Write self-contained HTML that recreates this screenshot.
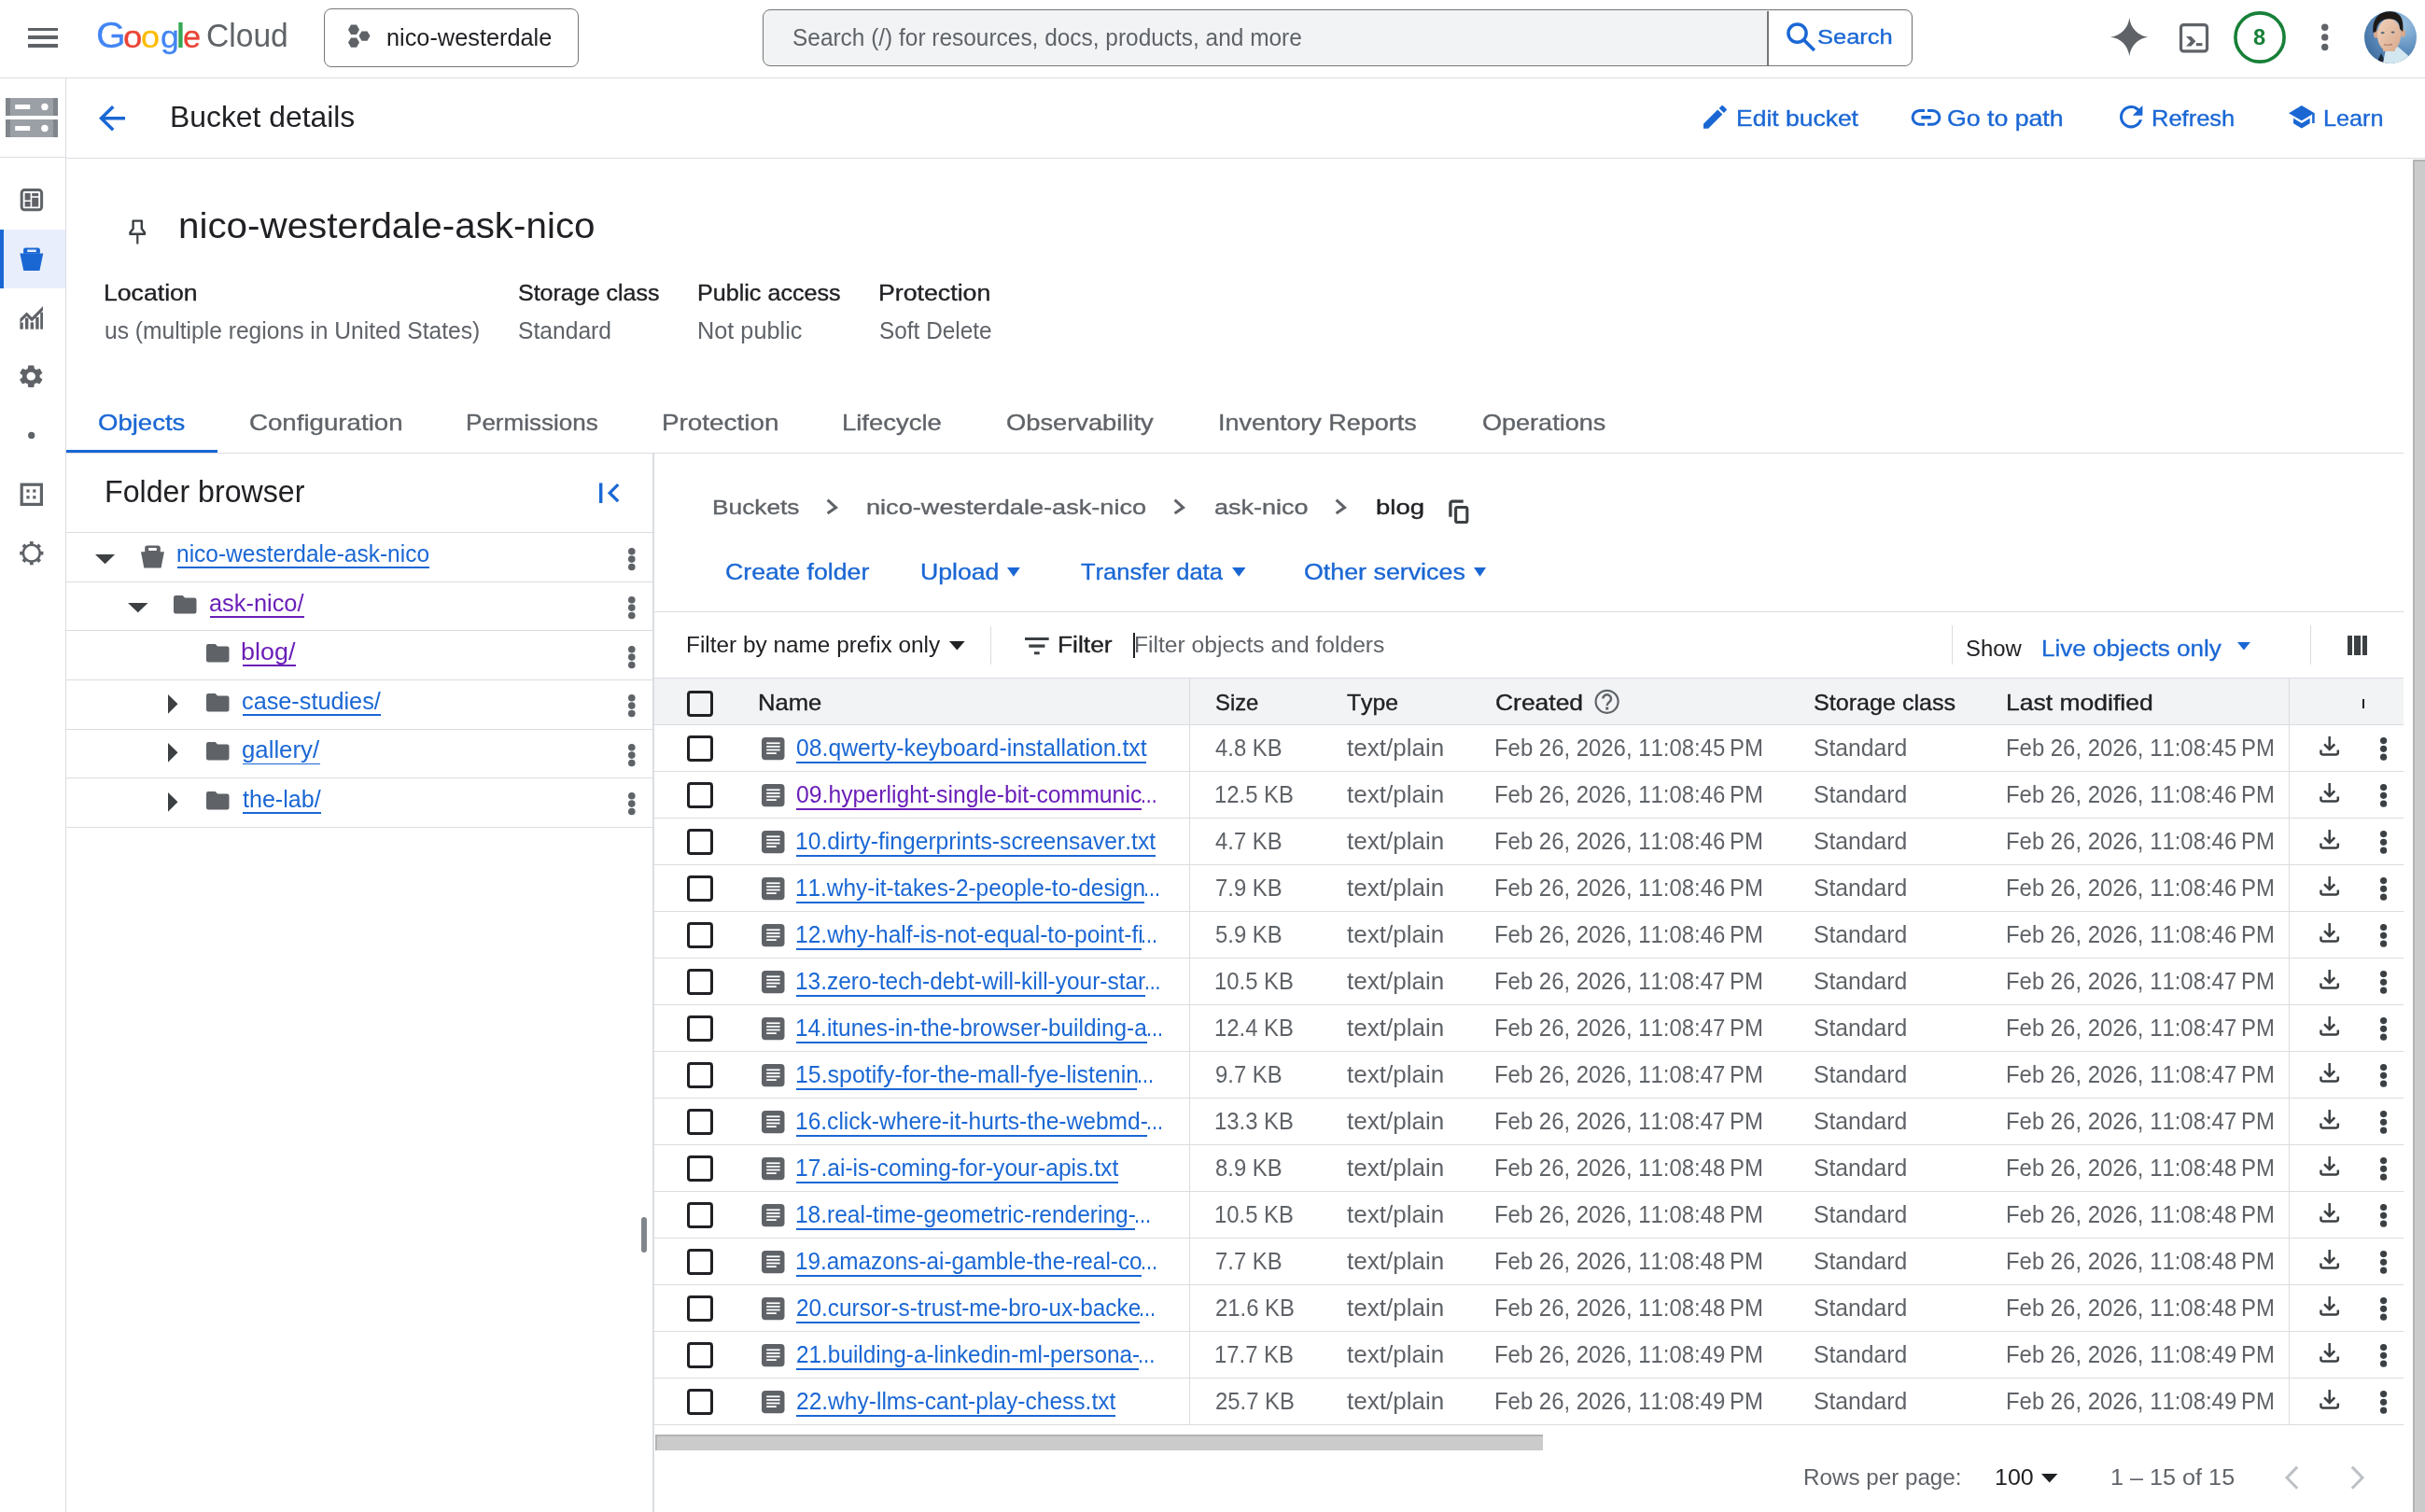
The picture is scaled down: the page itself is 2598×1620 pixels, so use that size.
<!DOCTYPE html>
<html><head><meta charset="utf-8"><title>Bucket details</title><style>*{margin:0;padding:0}
html,body{width:2598px;height:1620px;overflow:hidden;background:#fff}
body{position:relative;font-family:"Liberation Sans",sans-serif;will-change:transform}
.t{position:absolute;white-space:nowrap;line-height:1;font-kerning:none;transform-origin:0 0;font-family:"Liberation Sans",sans-serif}
.r{position:absolute}
.s{position:absolute;overflow:visible}
</style></head><body>
<div class="r" style="left:30.00px;top:29.50px;width:32.00px;height:3.60px;background:#5f6368;"></div>
<div class="r" style="left:30.00px;top:38.20px;width:32.00px;height:3.60px;background:#5f6368;"></div>
<div class="r" style="left:30.00px;top:47.00px;width:32.00px;height:3.60px;background:#5f6368;"></div>
<span class="t" style="left:102.65px;top:18.68px;font-size:38.30px;color:#4285f4;transform:scaleX(1.0639);-webkit-text-stroke:0.3px #4285f4;">G</span>
<span class="t" style="left:131.66px;top:22.74px;font-size:33.50px;color:#ea4335;transform:scaleX(1.0937);-webkit-text-stroke:0.3px #ea4335;">o</span>
<span class="t" style="left:151.49px;top:22.74px;font-size:33.50px;color:#fbbc04;transform:scaleX(1.0748);-webkit-text-stroke:0.3px #fbbc04;">o</span>
<span class="t" style="left:171.51px;top:22.74px;font-size:33.50px;color:#4285f4;transform:scaleX(1.0621);-webkit-text-stroke:0.3px #4285f4;">g</span>
<span class="t" style="left:188.40px;top:20.63px;font-size:36.00px;color:#34a853;transform:scaleX(1.3590);">l</span>
<span class="t" style="left:196.44px;top:22.74px;font-size:33.50px;color:#ea4335;transform:scaleX(1.0242);-webkit-text-stroke:0.3px #ea4335;">e</span>
<span class="t" style="left:220.79px;top:20.70px;font-size:35.80px;color:#5f6368;transform:scaleX(0.9383);">Cloud</span>
<div class="r" style="left:347.00px;top:9.00px;width:273.00px;height:63.00px;background:#fff;border:1.6px solid #747775;border-radius:8px;box-sizing:border-box;"></div>
<svg class="s" style="left:368.00px;top:22.00px" width="34.00" height="34.00" viewBox="0 0 34 34"><polygon points="17.00,9.80 14.00,15.00 8.00,15.00 5.00,9.80 8.00,4.60 14.00,4.60" fill="#5f6368"/><polygon points="28.50,16.60 25.50,21.80 19.50,21.80 16.50,16.60 19.50,11.40 25.50,11.40" fill="#5f6368"/><polygon points="17.00,23.60 14.00,28.80 8.00,28.80 5.00,23.60 8.00,18.40 14.00,18.40" fill="#5f6368"/></svg>
<span class="t" style="left:414.02px;top:26.99px;font-size:26.00px;color:#202124;transform:scaleX(0.9737);">nico-westerdale</span>
<div class="r" style="left:817.00px;top:10.00px;width:1231.50px;height:61.00px;background:#f1f3f4;border:1.6px solid #747775;border-radius:8px;box-sizing:border-box;"></div>
<div class="r" style="left:1894.00px;top:11.50px;width:153.00px;height:58.00px;background:#fff;border-radius:0 7px 7px 0;"></div>
<div class="r" style="left:1893.20px;top:11.50px;width:1.60px;height:58.00px;background:#747775;"></div>
<span class="t" style="left:848.89px;top:27.67px;font-size:25.20px;color:#5f6368;transform:scaleX(0.9699);">Search (/) for resources, docs, products, and more</span>
<svg class="s" style="left:1908.00px;top:20.00px" width="42.00" height="40.00" viewBox="0 0 42 40"><circle cx="17.50" cy="15.60" r="9.6" fill="none" stroke="#1a67d4" stroke-width="3.5"/><line x1="24.50" y1="22.80" x2="35.80" y2="34.00" stroke="#1a67d4" stroke-width="3.7"/></svg>
<span class="t" style="left:1946.84px;top:29.47px;font-size:22.60px;color:#1a67d4;transform:scaleX(1.1286);-webkit-text-stroke:0.35px #1a67d4;">Search</span>
<svg class="s" style="left:2258.70px;top:17.20px" width="44.60" height="45.30" viewBox="0 0 44.6 45.3"><path transform="translate(2 2) scale(1.6917 1.7208) translate(0.000 0.000)" d="M12 0 C12.6 6.4 17.6 11.4 24 12 C17.6 12.6 12.6 17.6 12 24 C11.4 17.6 6.4 12.6 0 12 C6.4 11.4 11.4 6.4 12 0 Z" fill="#5f6368" /></svg>
<svg class="s" style="left:2332.00px;top:22.00px" width="38.00" height="38.00" viewBox="0 0 38 38"><rect x="4.5" y="4.6" width="28" height="28.3" rx="3" fill="none" stroke="#5f6368" stroke-width="3.2"/><path d="M10 17 H15.4 L20.4 22.3 L15.4 27.6 H10 L15 22.3Z" fill="#5f6368"/><rect x="20.8" y="24.1" width="6.6" height="3.1" fill="#5f6368"/></svg>
<svg class="s" style="left:2390.00px;top:9.00px" width="62.00" height="62.00" viewBox="0 0 62 62"><circle cx="31" cy="31" r="26.1" fill="none" stroke="#188038" stroke-width="3.6"/></svg>
<span class="t" style="left:2414.25px;top:28.53px;font-size:23.00px;color:#188038;transform:scaleX(1.0305);font-weight:bold;">8</span>
<svg class="s" style="left:2484.00px;top:22.00px" width="14.00" height="36.00" viewBox="0 0 14 36"><circle cx="6.7" cy="7.20" r="3.7" fill="#5f6368"/><circle cx="6.7" cy="17.90" r="3.7" fill="#5f6368"/><circle cx="6.7" cy="28.50" r="3.7" fill="#5f6368"/></svg>
<svg class="s" style="left:2530px;top:9px" width="62" height="62" viewBox="2530 9 62 62">
<defs><clipPath id="avc"><circle cx="2561" cy="40" r="28"/></clipPath>
<radialGradient id="avg" cx="0.72" cy="0.28" r="0.8"><stop offset="0" stop-color="#9cc2e2"/><stop offset="0.55" stop-color="#5f8fbf"/><stop offset="1" stop-color="#3f6d9f"/></radialGradient>
<linearGradient id="avf" x1="0" y1="0" x2="1" y2="1"><stop offset="0" stop-color="#f0d2bb"/><stop offset="1" stop-color="#d9a98d"/></linearGradient></defs>
<g clip-path="url(#avc)">
<rect x="2530" y="9" width="62" height="62" fill="url(#avg)"/>
<path d="M2544 72 L2551 57 L2558 72Z" fill="#1c2636"/>
<path d="M2552 72 L2556 53 L2569 50 L2585 64 L2585 72Z" fill="#d3e7f1"/>
<rect x="2553" y="46" width="13" height="9" fill="#d9ad92"/>
<ellipse cx="2545.6" cy="36.5" rx="2.6" ry="4.2" fill="#d7a98d"/><ellipse cx="2574.4" cy="35.5" rx="2.6" ry="4.2" fill="#d7a98d"/>
<ellipse cx="2559.5" cy="37.5" rx="12.6" ry="17.6" fill="url(#avf)"/>
<path d="M2542.5 35 C2541 20 2549 12.3 2560 12.3 C2570.5 12.3 2576 19 2574.2 34 L2571 31 C2571 24 2567 19.6 2559 20.2 C2551 20.6 2546.5 25 2545.6 34 Z" fill="#1e1a18"/>
<ellipse cx="2552.6" cy="35.2" rx="2" ry="1.1" fill="#5a6a78"/><ellipse cx="2563.6" cy="34.6" rx="2" ry="1.1" fill="#5a6a78"/>
<path d="M2554 47.6 Q2558.5 49 2563 47.4" stroke="#b07c6a" stroke-width="1.2" fill="none"/>
</g></svg>
<div class="r" style="left:0.00px;top:83.00px;width:2598.00px;height:1.00px;background:#dadce0;"></div>
<div class="r" style="left:70.00px;top:84.00px;width:1.00px;height:1536.00px;background:#dadce0;"></div>
<svg class="s" style="left:0px;top:90px" width="70" height="70" viewBox="0 0 70 70">
<rect x="6" y="15" width="56" height="19" fill="#9aa0a6"/><rect x="6" y="15" width="5" height="19" fill="#80868b"/><rect x="57" y="15" width="5" height="19" fill="#80868b"/>
<rect x="16.2" y="22" width="16" height="5" fill="#fff"/><circle cx="47.9" cy="24.5" r="3.7" fill="#fff"/>
<rect x="6" y="38" width="56" height="19" fill="#9aa0a6"/><rect x="6" y="38" width="5" height="19" fill="#80868b"/><rect x="57" y="38" width="5" height="19" fill="#80868b"/>
<rect x="16.2" y="45" width="16" height="5" fill="#fff"/><circle cx="47.9" cy="47.5" r="3.7" fill="#fff"/>
</svg>
<div class="r" style="left:0.00px;top:168.00px;width:70.00px;height:1.00px;background:#dadce0;"></div>
<div class="r" style="left:71.00px;top:169.00px;width:2527.00px;height:1.00px;background:#dadce0;"></div>
<svg class="s" style="left:20.00px;top:200.00px" width="28.00" height="29.00" viewBox="0 0 28 29"><rect x="3.2" y="3.6" width="21.4" height="21.2" rx="3" fill="none" stroke="#5f6368" stroke-width="3"/><rect x="6.6" y="7" width="6" height="7.5" fill="#5f6368"/><rect x="6.6" y="16" width="6" height="5.5" fill="#5f6368"/><rect x="14.2" y="7" width="7" height="3.2" fill="#5f6368"/><rect x="14.2" y="11.8" width="7" height="9.7" fill="#5f6368"/></svg>
<div class="r" style="left:0.00px;top:246.00px;width:70.00px;height:63.00px;background:#e8eefb;"></div>
<div class="r" style="left:0.00px;top:246.00px;width:4.00px;height:63.00px;background:#1a67d4;"></div>
<svg class="s" style="left:20.00px;top:263.00px" width="28.00" height="29.00" viewBox="0 0 28 29"><path d="M7.3 2.4 h13.4 a2.2 2.2 0 0 1 2.2 2.2 v4.2 h-17.8 v-4.2 a2.2 2.2 0 0 1 2.2 -2.2z M9.2 4.6 v2.5 h9.6 v-2.5z" fill="#1a67d4" fill-rule="evenodd"/><path d="M1.4 8.6 H26.3 L22.4 27 H5.3 Z" fill="#1a67d4"/></svg>
<svg class="s" style="left:20.00px;top:326.00px" width="28.00" height="29.00" viewBox="0 0 28 29"><path d="M1.4 15.6 L8.6 8.4 L14.2 14 L26 2 V6.4 L14.2 18.4 L8.6 12.8 L1.4 20z" fill="#5f6368"/><rect x="1.4" y="19.5" width="3.4" height="7.2" fill="#5f6368"/><rect x="7" y="14.6" width="3.4" height="12.1" fill="#5f6368"/><rect x="12.6" y="19.4" width="3.4" height="7.3" fill="#5f6368"/><rect x="18.2" y="13.8" width="3.4" height="12.9" fill="#5f6368"/><rect x="23.2" y="8.6" width="2.8" height="18.1" fill="#5f6368"/></svg>
<svg class="s" style="left:19.40px;top:389.30px" width="28.60" height="28.40" viewBox="0 0 28.6 28.4"><path transform="translate(2 2) scale(1.2947 1.2200) translate(-2.500 -2.000)" d="M19.14 12.94c.04-.3.06-.61.06-.94 0-.32-.02-.64-.07-.94l2.03-1.58c.18-.14.23-.41.12-.61l-1.92-3.32c-.12-.22-.37-.29-.59-.22l-2.39.96c-.5-.38-1.03-.7-1.62-.94l-.36-2.54c-.04-.24-.24-.41-.48-.41h-3.84c-.24 0-.43.17-.47.41l-.36 2.54c-.59.24-1.13.57-1.62.94l-2.39-.96c-.22-.08-.47 0-.59.22L2.74 8.87c-.12.21-.08.47.12.61l2.03 1.58c-.05.3-.09.63-.09.94s.02.64.07.94l-2.03 1.58c-.18.14-.23.41-.12.61l1.92 3.32c.12.22.37.29.59.22l2.39-.96c.5.38 1.03.7 1.62.94l.36 2.54c.05.24.24.41.48.41h3.84c.24 0 .44-.17.47-.41l.36-2.54c.59-.24 1.13-.56 1.62-.94l2.39.96c.22.08.47 0 .59-.22l1.92-3.32c.12-.22.07-.47-.12-.61l-2.01-1.58zM12 15.6c-1.98 0-3.6-1.62-3.6-3.6s1.62-3.6 3.6-3.6 3.6 1.62 3.6 3.6-1.62 3.6-3.6 3.6z" fill="#5f6368" /></svg>
<svg class="s" style="left:28.00px;top:461.00px" width="12.00" height="12.00" viewBox="0 0 12 12"><circle cx="5.7" cy="5.4" r="3.6" fill="#5f6368"/></svg>
<svg class="s" style="left:20.00px;top:516.00px" width="28.00" height="28.00" viewBox="0 0 28 28"><rect x="3.2" y="3.2" width="21.2" height="21.2" fill="none" stroke="#5f6368" stroke-width="3.2"/><rect x="8.4" y="8.4" width="3.2" height="3.2" fill="#5f6368"/><rect x="15.2" y="8.4" width="3.2" height="3.2" fill="#5f6368"/><rect x="8.4" y="15.2" width="3.2" height="3.2" fill="#5f6368"/><rect x="15.2" y="15.2" width="3.2" height="3.2" fill="#5f6368"/></svg>
<svg class="s" style="left:20.00px;top:579.00px" width="28.00" height="28.00" viewBox="0 0 28 28"><g transform="translate(13.8 13.7)"><circle r="8.9" fill="none" stroke="#5f6368" stroke-width="2.6"/><rect x="-1.9" y="-12.6" width="3.8" height="3.6" transform="rotate(0)" fill="#5f6368"/><rect x="-1.9" y="-12.6" width="3.8" height="3.6" transform="rotate(45)" fill="#5f6368"/><rect x="-1.9" y="-12.6" width="3.8" height="3.6" transform="rotate(90)" fill="#5f6368"/><rect x="-1.9" y="-12.6" width="3.8" height="3.6" transform="rotate(135)" fill="#5f6368"/><rect x="-1.9" y="-12.6" width="3.8" height="3.6" transform="rotate(180)" fill="#5f6368"/><rect x="-1.9" y="-12.6" width="3.8" height="3.6" transform="rotate(225)" fill="#5f6368"/><rect x="-1.9" y="-12.6" width="3.8" height="3.6" transform="rotate(270)" fill="#5f6368"/><rect x="-1.9" y="-12.6" width="3.8" height="3.6" transform="rotate(315)" fill="#5f6368"/></g></svg>
<svg class="s" style="left:104.00px;top:110.50px" width="32.00" height="31.50" viewBox="0 0 32 31.5"><path transform="translate(2 2) scale(1.7500 1.7188) translate(-4.000 -4.000)" d="M20 11H7.83l5.59-5.59L12 4l-8 8 8 8 1.41-1.41L7.83 13H20v-2z" fill="#1a67d4" /></svg>
<span class="t" style="left:181.89px;top:109.11px;font-size:32.00px;color:#202124;transform:scaleX(0.9952);">Bucket details</span>
<svg class="s" style="left:1823.20px;top:111.20px" width="28.80" height="28.80" viewBox="0 0 28.8 28.8"><path transform="translate(2 2) scale(1.3778 1.3778) translate(-3.000 -3.000)" d="M3 17.25V21h3.75L17.81 9.94l-3.75-3.75L3 17.25zM20.71 7.04c.39-.39.39-1.02 0-1.41l-2.34-2.34c-.39-.39-1.02-.39-1.41 0l-1.83 1.83 3.75 3.75 1.83-1.83z" fill="#1a67d4" /></svg>
<span class="t" style="left:1860.33px;top:115.05px;font-size:23.80px;color:#1a67d4;transform:scaleX(1.1123);-webkit-text-stroke:0.35px #1a67d4;">Edit bucket</span>
<svg class="s" style="left:2046.00px;top:113.00px" width="36.00" height="26.00" viewBox="0 0 36 26"><path d="M16 5.4 H10.5 a7.4 7.4 0 0 0 0 14.8 H16" fill="none" stroke="#1a67d4" stroke-width="3"/><path d="M19 5.4 H24.5 a7.4 7.4 0 0 1 0 14.8 H19" fill="none" stroke="#1a67d4" stroke-width="3"/><rect x="12.3" y="11" width="10.5" height="3.6" fill="#1a67d4"/></svg>
<span class="t" style="left:2086.16px;top:115.05px;font-size:23.80px;color:#1a67d4;transform:scaleX(1.1208);-webkit-text-stroke:0.35px #1a67d4;">Go to path</span>
<svg class="s" style="left:2268.60px;top:111.20px" width="28.40" height="28.40" viewBox="0 0 28.4 28.4"><path transform="translate(2 2) scale(1.5250 1.5250) translate(-4.000 -4.000)" d="M17.65 6.35C16.2 4.9 14.21 4 12 4c-4.42 0-7.99 3.58-7.99 8s3.57 8 7.99 8c3.73 0 6.84-2.55 7.73-6h-2.08c-.82 2.33-3.04 4-5.65 4-3.31 0-6-2.69-6-6s2.69-6 6-6c1.66 0 3.14.69 4.22 1.78L13 11h7V4l-2.35 2.35z" fill="#1a67d4" /></svg>
<span class="t" style="left:2305.41px;top:115.05px;font-size:23.80px;color:#1a67d4;transform:scaleX(1.0709);-webkit-text-stroke:0.35px #1a67d4;">Refresh</span>
<svg class="s" style="left:2450.00px;top:111.20px" width="31.70" height="28.40" viewBox="0 0 31.7 28.4"><path transform="translate(2 2) scale(1.2591 1.3556) translate(-1.000 -3.000)" d="M5 13.18v4L12 21l7-3.82v-4L12 17l-7-3.82zM12 3L1 9l11 6 9-4.91V17h2V9L12 3z" fill="#1a67d4" /></svg>
<span class="t" style="left:2489.43px;top:115.05px;font-size:23.80px;color:#1a67d4;transform:scaleX(1.0597);-webkit-text-stroke:0.35px #1a67d4;">Learn</span>
<div class="r" style="left:2585.00px;top:171.00px;width:13.00px;height:1449.00px;background:#cbcbcb;border-left:2px solid #b3b3b3;border-top:2px solid #b3b3b3;box-sizing:border-box;"></div>
<svg class="s" style="left:134.00px;top:232.00px" width="28.00" height="33.00" viewBox="0 0 28 33"><path d="M8.6 4.6 h9.2 v8.4 l3.2 4.2 v1.6 h-15.6 v-1.6 l3.2 -4.2z" fill="none" stroke="#3c4043" stroke-width="2.4" stroke-linejoin="round"/><rect x="12.2" y="18.6" width="2.2" height="10.8" fill="#3c4043"/></svg>
<span class="t" style="left:190.92px;top:222.73px;font-size:38.60px;color:#202124;transform:scaleX(1.0465);">nico-westerdale-ask-nico</span>
<span class="t" style="left:111.31px;top:302.15px;font-size:24.40px;color:#202124;transform:scaleX(1.0918);-webkit-text-stroke:0.35px #202124;">Location</span>
<span class="t" style="left:111.90px;top:341.76px;font-size:25.80px;color:#5f6368;transform:scaleX(0.9543);">us (multiple regions in United States)</span>
<span class="t" style="left:555.16px;top:302.15px;font-size:24.40px;color:#202124;transform:scaleX(1.0251);-webkit-text-stroke:0.35px #202124;">Storage class</span>
<span class="t" style="left:555.18px;top:341.76px;font-size:25.80px;color:#5f6368;transform:scaleX(0.9551);">Standard</span>
<span class="t" style="left:747.24px;top:302.15px;font-size:24.40px;color:#202124;transform:scaleX(1.0301);-webkit-text-stroke:0.35px #202124;">Public access</span>
<span class="t" style="left:747.23px;top:341.76px;font-size:25.80px;color:#5f6368;transform:scaleX(0.9801);">Not public</span>
<span class="t" style="left:941.41px;top:302.15px;font-size:24.40px;color:#202124;transform:scaleX(1.0953);-webkit-text-stroke:0.35px #202124;">Protection</span>
<span class="t" style="left:942.49px;top:341.76px;font-size:25.80px;color:#5f6368;transform:scaleX(0.9448);">Soft Delete</span>
<span class="t" style="left:105.10px;top:440.65px;font-size:23.80px;color:#1a67d4;transform:scaleX(1.1576);-webkit-text-stroke:0.35px #1a67d4;">Objects</span>
<span class="t" style="left:267.39px;top:440.65px;font-size:23.80px;color:#5f6368;transform:scaleX(1.1627);-webkit-text-stroke:0.35px #5f6368;">Configuration</span>
<span class="t" style="left:499.06px;top:440.65px;font-size:23.80px;color:#5f6368;transform:scaleX(1.0947);-webkit-text-stroke:0.35px #5f6368;">Permissions</span>
<span class="t" style="left:709.42px;top:440.65px;font-size:23.80px;color:#5f6368;transform:scaleX(1.1702);-webkit-text-stroke:0.35px #5f6368;">Protection</span>
<span class="t" style="left:902.45px;top:440.65px;font-size:23.80px;color:#5f6368;transform:scaleX(1.1531);-webkit-text-stroke:0.35px #5f6368;">Lifecycle</span>
<span class="t" style="left:1078.41px;top:440.65px;font-size:23.80px;color:#5f6368;transform:scaleX(1.1460);-webkit-text-stroke:0.35px #5f6368;">Observability</span>
<span class="t" style="left:1305.31px;top:440.65px;font-size:23.80px;color:#5f6368;transform:scaleX(1.1321);-webkit-text-stroke:0.35px #5f6368;">Inventory Reports</span>
<span class="t" style="left:1587.72px;top:440.65px;font-size:23.80px;color:#5f6368;transform:scaleX(1.1360);-webkit-text-stroke:0.35px #5f6368;">Operations</span>
<div class="r" style="left:71.00px;top:485.00px;width:2504.00px;height:1.00px;background:#dadce0;"></div>
<div class="r" style="left:71.00px;top:482.00px;width:162.00px;height:3.00px;background:#1a67d4;"></div>
<div class="r" style="left:699.00px;top:486.00px;width:2.00px;height:1134.00px;background:#dadce0;"></div>
<span class="t" style="left:111.76px;top:510.69px;font-size:32.50px;color:#202124;transform:scaleX(0.9891);">Folder browser</span>
<svg class="s" style="left:638.00px;top:514.00px" width="30.00" height="30.00" viewBox="0 0 30 30"><rect x="4" y="3.5" width="3.4" height="21.5" fill="#1a67d4"/><path d="M24.2 5.2 L15.2 14.2 L24.2 23.2" fill="none" stroke="#1a67d4" stroke-width="3.3"/></svg>
<div class="r" style="left:71.00px;top:570.00px;width:628.00px;height:1.00px;background:#dadce0;"></div>
<div class="r" style="left:71.00px;top:623.00px;width:628.00px;height:1.00px;background:#dadce0;"></div>
<div class="r" style="left:71.00px;top:675.00px;width:628.00px;height:1.00px;background:#dadce0;"></div>
<div class="r" style="left:71.00px;top:728.00px;width:628.00px;height:1.00px;background:#dadce0;"></div>
<div class="r" style="left:71.00px;top:781.00px;width:628.00px;height:1.00px;background:#dadce0;"></div>
<div class="r" style="left:71.00px;top:833.00px;width:628.00px;height:1.00px;background:#dadce0;"></div>
<div class="r" style="left:71.00px;top:886.00px;width:628.00px;height:1.00px;background:#dadce0;"></div>
<svg class="s" style="left:101.40px;top:592.50px" width="23.10" height="12.20" viewBox="0 0 23.1 12.2"><path d="M1 1 H22.10 L11.55 11.20 Z" fill="#3c4043"/></svg>
<svg class="s" style="left:151.40px;top:583.50px" width="26.00" height="26.00" viewBox="0 0 26 26"><path d="M6.8 0.4 h11.4 a2.6 2.6 0 0 1 2.6 2.6 v5 h-16.6 v-5 a2.6 2.6 0 0 1 2.6 -2.6z M8.2 3 v3 h8.6 v-3z" fill="#5f6368" fill-rule="evenodd"/><path d="M0 7.2 H24.9 L21.6 24.6 H3.3 Z" fill="#5f6368"/></svg>
<span class="t" style="left:188.97px;top:580.02px;font-size:26.20px;color:#1a67d4;transform:scaleX(0.9358);">nico-westerdale-ask-nico</span>
<div class="r" style="left:190.10px;top:607.40px;width:269.50px;height:1.70px;background:#1a67d4;"></div>
<svg class="s" style="left:672.40px;top:585.70px" width="9.60" height="26.30" viewBox="0 0 9.6 26.3"><circle cx="4.80" cy="4.80" r="3.80" fill="#5f6368"/><circle cx="4.80" cy="13.10" r="3.80" fill="#5f6368"/><circle cx="4.80" cy="21.50" r="3.80" fill="#5f6368"/></svg>
<svg class="s" style="left:136.00px;top:645.03px" width="23.60" height="12.20" viewBox="0 0 23.6 12.2"><path d="M1 1 H22.60 L11.80 11.20 Z" fill="#3c4043"/></svg>
<svg class="s" style="left:186.40px;top:637.53px" width="25.00" height="20.00" viewBox="0 0 25 20"><path d="M2.2 0 H9.6 L12.1 2.5 H22.3 A2.2 2.2 0 0 1 24.5 4.7 V17.2 A2.2 2.2 0 0 1 22.3 19.4 H2.2 A2.2 2.2 0 0 1 0 17.2 V2.2 A2.2 2.2 0 0 1 2.2 0Z" fill="#5f6368"/></svg>
<span class="t" style="left:224.22px;top:632.55px;font-size:26.20px;color:#6b1fb8;transform:scaleX(0.9689);">ask-nico/</span>
<div class="r" style="left:224.80px;top:659.93px;width:101.50px;height:1.70px;background:#6b1fb8;"></div>
<svg class="s" style="left:672.40px;top:638.23px" width="9.60" height="26.30" viewBox="0 0 9.6 26.3"><circle cx="4.80" cy="4.80" r="3.80" fill="#5f6368"/><circle cx="4.80" cy="13.10" r="3.80" fill="#5f6368"/><circle cx="4.80" cy="21.50" r="3.80" fill="#5f6368"/></svg>
<svg class="s" style="left:221.00px;top:690.06px" width="25.00" height="20.00" viewBox="0 0 25 20"><path d="M2.2 0 H9.6 L12.1 2.5 H22.3 A2.2 2.2 0 0 1 24.5 4.7 V17.2 A2.2 2.2 0 0 1 22.3 19.4 H2.2 A2.2 2.2 0 0 1 0 17.2 V2.2 A2.2 2.2 0 0 1 2.2 0Z" fill="#5f6368"/></svg>
<span class="t" style="left:258.26px;top:685.08px;font-size:26.20px;color:#6b1fb8;transform:scaleX(1.0286);">blog/</span>
<div class="r" style="left:259.50px;top:712.46px;width:57.70px;height:1.70px;background:#6b1fb8;"></div>
<svg class="s" style="left:672.40px;top:690.76px" width="9.60" height="26.30" viewBox="0 0 9.6 26.3"><circle cx="4.80" cy="4.80" r="3.80" fill="#5f6368"/><circle cx="4.80" cy="13.10" r="3.80" fill="#5f6368"/><circle cx="4.80" cy="21.50" r="3.80" fill="#5f6368"/></svg>
<svg class="s" style="left:179.00px;top:742.79px" width="12.50" height="22.70" viewBox="0 0 12.5 22.7"><path d="M1 1 V21.70 L11.50 11.35 Z" fill="#3c4043"/></svg>
<svg class="s" style="left:221.00px;top:742.59px" width="25.00" height="20.00" viewBox="0 0 25 20"><path d="M2.2 0 H9.6 L12.1 2.5 H22.3 A2.2 2.2 0 0 1 24.5 4.7 V17.2 A2.2 2.2 0 0 1 22.3 19.4 H2.2 A2.2 2.2 0 0 1 0 17.2 V2.2 A2.2 2.2 0 0 1 2.2 0Z" fill="#5f6368"/></svg>
<span class="t" style="left:258.93px;top:737.61px;font-size:26.20px;color:#1a67d4;transform:scaleX(0.9645);">case-studies/</span>
<div class="r" style="left:259.50px;top:764.99px;width:148.80px;height:1.70px;background:#1a67d4;"></div>
<svg class="s" style="left:672.40px;top:743.29px" width="9.60" height="26.30" viewBox="0 0 9.6 26.3"><circle cx="4.80" cy="4.80" r="3.80" fill="#5f6368"/><circle cx="4.80" cy="13.10" r="3.80" fill="#5f6368"/><circle cx="4.80" cy="21.50" r="3.80" fill="#5f6368"/></svg>
<svg class="s" style="left:179.00px;top:795.32px" width="12.50" height="22.70" viewBox="0 0 12.5 22.7"><path d="M1 1 V21.70 L11.50 11.35 Z" fill="#3c4043"/></svg>
<svg class="s" style="left:221.00px;top:795.12px" width="25.00" height="20.00" viewBox="0 0 25 20"><path d="M2.2 0 H9.6 L12.1 2.5 H22.3 A2.2 2.2 0 0 1 24.5 4.7 V17.2 A2.2 2.2 0 0 1 22.3 19.4 H2.2 A2.2 2.2 0 0 1 0 17.2 V2.2 A2.2 2.2 0 0 1 2.2 0Z" fill="#5f6368"/></svg>
<span class="t" style="left:258.92px;top:790.14px;font-size:26.20px;color:#1a67d4;transform:scaleX(0.9837);">gallery/</span>
<div class="r" style="left:259.50px;top:817.52px;width:83.00px;height:1.70px;background:#1a67d4;"></div>
<svg class="s" style="left:672.40px;top:795.82px" width="9.60" height="26.30" viewBox="0 0 9.6 26.3"><circle cx="4.80" cy="4.80" r="3.80" fill="#5f6368"/><circle cx="4.80" cy="13.10" r="3.80" fill="#5f6368"/><circle cx="4.80" cy="21.50" r="3.80" fill="#5f6368"/></svg>
<svg class="s" style="left:179.00px;top:847.85px" width="12.50" height="22.70" viewBox="0 0 12.5 22.7"><path d="M1 1 V21.70 L11.50 11.35 Z" fill="#3c4043"/></svg>
<svg class="s" style="left:221.00px;top:847.65px" width="25.00" height="20.00" viewBox="0 0 25 20"><path d="M2.2 0 H9.6 L12.1 2.5 H22.3 A2.2 2.2 0 0 1 24.5 4.7 V17.2 A2.2 2.2 0 0 1 22.3 19.4 H2.2 A2.2 2.2 0 0 1 0 17.2 V2.2 A2.2 2.2 0 0 1 2.2 0Z" fill="#5f6368"/></svg>
<span class="t" style="left:259.62px;top:842.67px;font-size:26.20px;color:#1a67d4;transform:scaleX(0.9576);">the-lab/</span>
<div class="r" style="left:259.50px;top:870.05px;width:84.30px;height:1.70px;background:#1a67d4;"></div>
<svg class="s" style="left:672.40px;top:848.35px" width="9.60" height="26.30" viewBox="0 0 9.6 26.3"><circle cx="4.80" cy="4.80" r="3.80" fill="#5f6368"/><circle cx="4.80" cy="13.10" r="3.80" fill="#5f6368"/><circle cx="4.80" cy="21.50" r="3.80" fill="#5f6368"/></svg>
<div class="r" style="left:687.20px;top:1304.00px;width:5.60px;height:37.70px;background:#80868b;border-radius:3px;"></div>
<span class="t" style="left:762.64px;top:533.01px;font-size:22.20px;color:#5f6368;transform:scaleX(1.1841);-webkit-text-stroke:0.35px #5f6368;">Buckets</span>
<svg class="s" style="left:884.40px;top:533.00px" width="16.20" height="21.60" viewBox="0 0 16.2 21.6"><path d="M2.60 2.60 L11.60 10.80 L2.60 17.00" fill="none" stroke="#5f6368" stroke-width="3.00"/></svg>
<span class="t" style="left:928.10px;top:533.01px;font-size:22.20px;color:#5f6368;transform:scaleX(1.2228);-webkit-text-stroke:0.35px #5f6368;">nico-westerdale-ask-nico</span>
<svg class="s" style="left:1256.40px;top:533.00px" width="16.20" height="21.60" viewBox="0 0 16.2 21.6"><path d="M2.60 2.60 L11.60 10.80 L2.60 17.00" fill="none" stroke="#5f6368" stroke-width="3.00"/></svg>
<span class="t" style="left:1301.05px;top:533.01px;font-size:22.20px;color:#5f6368;transform:scaleX(1.2180);-webkit-text-stroke:0.35px #5f6368;">ask-nico</span>
<svg class="s" style="left:1429.40px;top:533.00px" width="16.20" height="21.60" viewBox="0 0 16.2 21.6"><path d="M2.60 2.60 L11.60 10.80 L2.60 17.00" fill="none" stroke="#5f6368" stroke-width="3.00"/></svg>
<span class="t" style="left:1474.23px;top:533.01px;font-size:22.20px;color:#202124;transform:scaleX(1.2401);-webkit-text-stroke:0.35px #202124;">blog</span>
<svg class="s" style="left:1548.00px;top:532.00px" width="30.00" height="32.00" viewBox="0 0 30 32"><path d="M5.9 21.7 V7.4 a2.2 2.2 0 0 1 2.2 -2.2 H19.7" fill="none" stroke="#3c4043" stroke-width="3.3"/><rect x="11.6" y="11.5" width="12.2" height="16" rx="1.8" fill="none" stroke="#3c4043" stroke-width="3.1"/></svg>
<span class="t" style="left:777.04px;top:600.55px;font-size:24.40px;color:#1a67d4;transform:scaleX(1.0946);-webkit-text-stroke:0.35px #1a67d4;">Create folder</span>
<span class="t" style="left:986.14px;top:600.55px;font-size:24.40px;color:#1a67d4;transform:scaleX(1.0925);-webkit-text-stroke:0.35px #1a67d4;">Upload</span>
<svg class="s" style="left:1077.80px;top:607.00px" width="15.80" height="11.80" viewBox="0 0 15.8 11.8"><path d="M1 1 H14.80 L7.90 10.80 Z" fill="#1a67d4"/></svg>
<span class="t" style="left:1157.63px;top:600.55px;font-size:24.40px;color:#1a67d4;transform:scaleX(1.0473);-webkit-text-stroke:0.35px #1a67d4;">Transfer data</span>
<svg class="s" style="left:1318.50px;top:607.00px" width="16.50" height="11.80" viewBox="0 0 16.5 11.8"><path d="M1 1 H15.50 L8.25 10.80 Z" fill="#1a67d4"/></svg>
<span class="t" style="left:1397.13px;top:600.55px;font-size:24.40px;color:#1a67d4;transform:scaleX(1.0989);-webkit-text-stroke:0.35px #1a67d4;">Other services</span>
<svg class="s" style="left:1577.80px;top:607.00px" width="15.00" height="11.80" viewBox="0 0 15 11.8"><path d="M1 1 H14.00 L7.50 10.80 Z" fill="#1a67d4"/></svg>
<div class="r" style="left:701.00px;top:655.00px;width:1874.00px;height:1.00px;background:#dadce0;"></div>
<span class="t" style="left:734.50px;top:678.91px;font-size:24.80px;color:#202124;transform:scaleX(0.9827);">Filter by name prefix only</span>
<svg class="s" style="left:1015.60px;top:686.00px" width="18.60" height="11.50" viewBox="0 0 18.6 11.5"><path d="M1 1 H17.60 L9.30 10.50 Z" fill="#202124"/></svg>
<div class="r" style="left:1061.00px;top:671.00px;width:1.00px;height:41.00px;background:#dadce0;"></div>
<svg class="s" style="left:1095.80px;top:680.70px" width="29.70" height="22.30" viewBox="0 0 29.7 22.3"><path transform="translate(2 2) scale(1.4278 1.5250) translate(-3.000 -6.000)" d="M10 18h4v-2h-4v2zM3 6v2h18V6H3zm3 7h12v-2H6v2z" fill="#3c4043" /></svg>
<span class="t" style="left:1132.64px;top:678.91px;font-size:24.80px;color:#202124;transform:scaleX(1.0634);-webkit-text-stroke:0.35px #202124;">Filter</span>
<div class="r" style="left:1214.20px;top:678.00px;width:1.80px;height:27.00px;background:#202124;"></div>
<span class="t" style="left:1215.48px;top:678.91px;font-size:24.80px;color:#5f6368;transform:scaleX(0.9935);">Filter objects and folders</span>
<div class="r" style="left:2091.00px;top:670.00px;width:1.00px;height:42.00px;background:#dadce0;"></div>
<span class="t" style="left:2105.92px;top:682.61px;font-size:24.80px;color:#202124;transform:scaleX(0.9611);">Show</span>
<span class="t" style="left:2186.86px;top:682.95px;font-size:24.40px;color:#1a67d4;transform:scaleX(1.0693);-webkit-text-stroke:0.30px #1a67d4;">Live objects only</span>
<svg class="s" style="left:2395.50px;top:687.30px" width="15.90" height="10.40" viewBox="0 0 15.9 10.4"><path d="M1 1 H14.90 L7.95 9.40 Z" fill="#1a67d4"/></svg>
<div class="r" style="left:2475.00px;top:670.00px;width:1.00px;height:42.00px;background:#dadce0;"></div>
<div class="r" style="left:2515.20px;top:681.20px;width:5.00px;height:20.60px;background:#3c4043;"></div>
<div class="r" style="left:2522.30px;top:681.20px;width:6.60px;height:20.60px;background:#3c4043;"></div>
<div class="r" style="left:2531.20px;top:681.20px;width:4.70px;height:20.60px;background:#3c4043;"></div>
<div class="r" style="left:701.00px;top:727.00px;width:1874.00px;height:49.00px;background:#f1f3f4;"></div>
<div class="r" style="left:701.00px;top:726.00px;width:1874.00px;height:1.00px;background:#dadce0;"></div>
<div class="r" style="left:736.00px;top:740.00px;width:28.00px;height:28.00px;background:transparent;border:3px solid #202124;border-radius:4px;box-sizing:border-box;"></div>
<span class="t" style="left:811.60px;top:740.88px;font-size:24.00px;color:#202124;transform:scaleX(1.0675);-webkit-text-stroke:0.35px #202124;">Name</span>
<span class="t" style="left:1301.92px;top:740.88px;font-size:24.00px;color:#202124;transform:scaleX(0.9926);-webkit-text-stroke:0.35px #202124;">Size</span>
<span class="t" style="left:1443.05px;top:740.88px;font-size:24.00px;color:#202124;transform:scaleX(1.0280);-webkit-text-stroke:0.35px #202124;">Type</span>
<span class="t" style="left:1601.86px;top:740.88px;font-size:24.00px;color:#202124;transform:scaleX(1.1015);-webkit-text-stroke:0.35px #202124;">Created</span>
<svg class="s" style="left:1706.00px;top:736.00px" width="32.00" height="32.00" viewBox="0 0 32 32"><circle cx="15.6" cy="15.8" r="12" fill="none" stroke="#5f6368" stroke-width="2.2"/><path d="M11.4 12.6 a4.3 4.3 0 1 1 6.6 3.6 c-1.6 1.1 -2.3 2 -2.3 3.9" fill="none" stroke="#5f6368" stroke-width="2.5"/><rect x="14.2" y="21.5" width="3" height="3" fill="#5f6368"/></svg>
<span class="t" style="left:1943.06px;top:740.88px;font-size:24.00px;color:#202124;transform:scaleX(1.0464);-webkit-text-stroke:0.35px #202124;">Storage class</span>
<span class="t" style="left:2149.03px;top:740.88px;font-size:24.00px;color:#202124;transform:scaleX(1.1046);-webkit-text-stroke:0.35px #202124;">Last modified</span>
<div class="r" style="left:2531.20px;top:749.40px;width:1.60px;height:9.20px;background:#202124;"></div>
<div class="r" style="left:701.00px;top:776.00px;width:1874.00px;height:1.00px;background:#dadce0;"></div>
<div class="r" style="left:1274.00px;top:727.00px;width:1.00px;height:800.00px;background:#dadce0;"></div>
<div class="r" style="left:2452.00px;top:727.00px;width:1.00px;height:800.00px;background:#dadce0;"></div>
<div class="r" style="left:701.00px;top:826.00px;width:1874.00px;height:1.00px;background:#dadce0;"></div>
<div class="r" style="left:736.00px;top:788.00px;width:28.00px;height:28.00px;background:transparent;border:3px solid #202124;border-radius:4px;box-sizing:border-box;"></div>
<svg class="s" style="left:816.30px;top:789.50px" width="24.60" height="24.30" viewBox="0 0 24.6 24.3"><rect x="0" y="0" width="24.5" height="24.2" rx="4" fill="#5f6368"/><rect x="5.2" y="5.4" width="14.4" height="1.8" fill="#fff"/><rect x="5.2" y="9" width="14.4" height="1.8" fill="#fff"/><rect x="5.2" y="12.6" width="14.4" height="1.8" fill="#fff"/><rect x="5.2" y="16.2" width="10.6" height="1.8" fill="#fff"/></svg>
<span class="t" style="left:852.83px;top:788.50px;font-size:25.40px;color:#1a67d4;transform:scaleX(0.9749);">08.qwerty-keyboard-installation.txt</span>
<div class="r" style="left:853.40px;top:815.90px;width:375.00px;height:2.00px;background:#1a67d4;"></div>
<span class="t" style="left:1302.45px;top:788.50px;font-size:25.40px;color:#5f6368;transform:scaleX(0.9393);">4.8 KB</span>
<span class="t" style="left:1443.41px;top:788.50px;font-size:25.40px;color:#5f6368;transform:scaleX(1.0258);">text/plain</span>
<span class="t" style="left:1601.24px;top:788.50px;font-size:25.40px;color:#5f6368;transform:scaleX(0.9417);">Feb 26, 2026, 11:08:45 PM</span>
<span class="t" style="left:1943.08px;top:788.50px;font-size:25.40px;color:#5f6368;transform:scaleX(0.9731);">Standard</span>
<span class="t" style="left:2149.24px;top:788.50px;font-size:25.40px;color:#5f6368;transform:scaleX(0.9413);">Feb 26, 2026, 11:08:45 PM</span>
<svg class="s" style="left:2482.00px;top:787.20px" width="28.00" height="25.00" viewBox="0 0 28 25"><path d="M13.7 1.9 V16 M8.1 10.4 L13.7 16 L19.3 10.4" fill="none" stroke="#3c4043" stroke-width="2.5"/><path d="M4.45 16.6 V19.6 a1.8 1.8 0 0 0 1.8 1.8 H21 a1.8 1.8 0 0 0 1.8 -1.8 V16.6" fill="none" stroke="#3c4043" stroke-width="2.5"/></svg>
<svg class="s" style="left:2548.90px;top:789.30px" width="9.20" height="26.80" viewBox="0 0 9.2 26.8"><circle cx="4.60" cy="4.60" r="3.60" fill="#3c4043"/><circle cx="4.60" cy="13.30" r="3.60" fill="#3c4043"/><circle cx="4.60" cy="22.20" r="3.60" fill="#3c4043"/></svg>
<div class="r" style="left:701.00px;top:876.00px;width:1874.00px;height:1.00px;background:#dadce0;"></div>
<div class="r" style="left:736.00px;top:838.00px;width:28.00px;height:28.00px;background:transparent;border:3px solid #202124;border-radius:4px;box-sizing:border-box;"></div>
<svg class="s" style="left:816.30px;top:839.50px" width="24.60" height="24.30" viewBox="0 0 24.6 24.3"><rect x="0" y="0" width="24.5" height="24.2" rx="4" fill="#5f6368"/><rect x="5.2" y="5.4" width="14.4" height="1.8" fill="#fff"/><rect x="5.2" y="9" width="14.4" height="1.8" fill="#fff"/><rect x="5.2" y="12.6" width="14.4" height="1.8" fill="#fff"/><rect x="5.2" y="16.2" width="10.6" height="1.8" fill="#fff"/></svg>
<span class="t" style="left:852.83px;top:838.50px;font-size:25.40px;color:#6b1fb8;transform:scaleX(0.9754);">09.hyperlight-single-bit-communic</span>
<div class="r" style="left:853.40px;top:865.90px;width:369.20px;height:2.00px;background:#6b1fb8;"></div>
<span class="t" style="left:1221.88px;top:838.50px;font-size:25.40px;color:#6b1fb8;transform:scaleX(0.8287);">...</span>
<span class="t" style="left:1301.18px;top:838.50px;font-size:25.40px;color:#5f6368;transform:scaleX(0.9393);">12.5 KB</span>
<span class="t" style="left:1443.41px;top:838.50px;font-size:25.40px;color:#5f6368;transform:scaleX(1.0258);">text/plain</span>
<span class="t" style="left:1601.24px;top:838.50px;font-size:25.40px;color:#5f6368;transform:scaleX(0.9417);">Feb 26, 2026, 11:08:46 PM</span>
<span class="t" style="left:1943.08px;top:838.50px;font-size:25.40px;color:#5f6368;transform:scaleX(0.9731);">Standard</span>
<span class="t" style="left:2149.24px;top:838.50px;font-size:25.40px;color:#5f6368;transform:scaleX(0.9413);">Feb 26, 2026, 11:08:46 PM</span>
<svg class="s" style="left:2482.00px;top:837.20px" width="28.00" height="25.00" viewBox="0 0 28 25"><path d="M13.7 1.9 V16 M8.1 10.4 L13.7 16 L19.3 10.4" fill="none" stroke="#3c4043" stroke-width="2.5"/><path d="M4.45 16.6 V19.6 a1.8 1.8 0 0 0 1.8 1.8 H21 a1.8 1.8 0 0 0 1.8 -1.8 V16.6" fill="none" stroke="#3c4043" stroke-width="2.5"/></svg>
<svg class="s" style="left:2548.90px;top:839.30px" width="9.20" height="26.80" viewBox="0 0 9.2 26.8"><circle cx="4.60" cy="4.60" r="3.60" fill="#3c4043"/><circle cx="4.60" cy="13.30" r="3.60" fill="#3c4043"/><circle cx="4.60" cy="22.20" r="3.60" fill="#3c4043"/></svg>
<div class="r" style="left:701.00px;top:926.00px;width:1874.00px;height:1.00px;background:#dadce0;"></div>
<div class="r" style="left:736.00px;top:888.00px;width:28.00px;height:28.00px;background:transparent;border:3px solid #202124;border-radius:4px;box-sizing:border-box;"></div>
<svg class="s" style="left:816.30px;top:889.50px" width="24.60" height="24.30" viewBox="0 0 24.6 24.3"><rect x="0" y="0" width="24.5" height="24.2" rx="4" fill="#5f6368"/><rect x="5.2" y="5.4" width="14.4" height="1.8" fill="#fff"/><rect x="5.2" y="9" width="14.4" height="1.8" fill="#fff"/><rect x="5.2" y="12.6" width="14.4" height="1.8" fill="#fff"/><rect x="5.2" y="16.2" width="10.6" height="1.8" fill="#fff"/></svg>
<span class="t" style="left:851.92px;top:888.50px;font-size:25.40px;color:#1a67d4;transform:scaleX(0.9703);">10.dirty-fingerprints-screensaver.txt</span>
<div class="r" style="left:853.40px;top:915.90px;width:384.60px;height:2.00px;background:#1a67d4;"></div>
<span class="t" style="left:1302.45px;top:888.50px;font-size:25.40px;color:#5f6368;transform:scaleX(0.9393);">4.7 KB</span>
<span class="t" style="left:1443.41px;top:888.50px;font-size:25.40px;color:#5f6368;transform:scaleX(1.0258);">text/plain</span>
<span class="t" style="left:1601.24px;top:888.50px;font-size:25.40px;color:#5f6368;transform:scaleX(0.9417);">Feb 26, 2026, 11:08:46 PM</span>
<span class="t" style="left:1943.08px;top:888.50px;font-size:25.40px;color:#5f6368;transform:scaleX(0.9731);">Standard</span>
<span class="t" style="left:2149.24px;top:888.50px;font-size:25.40px;color:#5f6368;transform:scaleX(0.9413);">Feb 26, 2026, 11:08:46 PM</span>
<svg class="s" style="left:2482.00px;top:887.20px" width="28.00" height="25.00" viewBox="0 0 28 25"><path d="M13.7 1.9 V16 M8.1 10.4 L13.7 16 L19.3 10.4" fill="none" stroke="#3c4043" stroke-width="2.5"/><path d="M4.45 16.6 V19.6 a1.8 1.8 0 0 0 1.8 1.8 H21 a1.8 1.8 0 0 0 1.8 -1.8 V16.6" fill="none" stroke="#3c4043" stroke-width="2.5"/></svg>
<svg class="s" style="left:2548.90px;top:889.30px" width="9.20" height="26.80" viewBox="0 0 9.2 26.8"><circle cx="4.60" cy="4.60" r="3.60" fill="#3c4043"/><circle cx="4.60" cy="13.30" r="3.60" fill="#3c4043"/><circle cx="4.60" cy="22.20" r="3.60" fill="#3c4043"/></svg>
<div class="r" style="left:701.00px;top:976.00px;width:1874.00px;height:1.00px;background:#dadce0;"></div>
<div class="r" style="left:736.00px;top:938.00px;width:28.00px;height:28.00px;background:transparent;border:3px solid #202124;border-radius:4px;box-sizing:border-box;"></div>
<svg class="s" style="left:816.30px;top:939.50px" width="24.60" height="24.30" viewBox="0 0 24.6 24.3"><rect x="0" y="0" width="24.5" height="24.2" rx="4" fill="#5f6368"/><rect x="5.2" y="5.4" width="14.4" height="1.8" fill="#fff"/><rect x="5.2" y="9" width="14.4" height="1.8" fill="#fff"/><rect x="5.2" y="12.6" width="14.4" height="1.8" fill="#fff"/><rect x="5.2" y="16.2" width="10.6" height="1.8" fill="#fff"/></svg>
<span class="t" style="left:851.94px;top:938.50px;font-size:25.40px;color:#1a67d4;transform:scaleX(0.9595);">11.why-it-takes-2-people-to-design</span>
<div class="r" style="left:853.40px;top:965.90px;width:372.20px;height:2.00px;background:#1a67d4;"></div>
<span class="t" style="left:1224.84px;top:938.50px;font-size:25.40px;color:#1a67d4;transform:scaleX(0.8468);">...</span>
<span class="t" style="left:1301.78px;top:938.50px;font-size:25.40px;color:#5f6368;transform:scaleX(0.9393);">7.9 KB</span>
<span class="t" style="left:1443.41px;top:938.50px;font-size:25.40px;color:#5f6368;transform:scaleX(1.0258);">text/plain</span>
<span class="t" style="left:1601.24px;top:938.50px;font-size:25.40px;color:#5f6368;transform:scaleX(0.9417);">Feb 26, 2026, 11:08:46 PM</span>
<span class="t" style="left:1943.08px;top:938.50px;font-size:25.40px;color:#5f6368;transform:scaleX(0.9731);">Standard</span>
<span class="t" style="left:2149.24px;top:938.50px;font-size:25.40px;color:#5f6368;transform:scaleX(0.9413);">Feb 26, 2026, 11:08:46 PM</span>
<svg class="s" style="left:2482.00px;top:937.20px" width="28.00" height="25.00" viewBox="0 0 28 25"><path d="M13.7 1.9 V16 M8.1 10.4 L13.7 16 L19.3 10.4" fill="none" stroke="#3c4043" stroke-width="2.5"/><path d="M4.45 16.6 V19.6 a1.8 1.8 0 0 0 1.8 1.8 H21 a1.8 1.8 0 0 0 1.8 -1.8 V16.6" fill="none" stroke="#3c4043" stroke-width="2.5"/></svg>
<svg class="s" style="left:2548.90px;top:939.30px" width="9.20" height="26.80" viewBox="0 0 9.2 26.8"><circle cx="4.60" cy="4.60" r="3.60" fill="#3c4043"/><circle cx="4.60" cy="13.30" r="3.60" fill="#3c4043"/><circle cx="4.60" cy="22.20" r="3.60" fill="#3c4043"/></svg>
<div class="r" style="left:701.00px;top:1026.00px;width:1874.00px;height:1.00px;background:#dadce0;"></div>
<div class="r" style="left:736.00px;top:988.00px;width:28.00px;height:28.00px;background:transparent;border:3px solid #202124;border-radius:4px;box-sizing:border-box;"></div>
<svg class="s" style="left:816.30px;top:989.50px" width="24.60" height="24.30" viewBox="0 0 24.6 24.3"><rect x="0" y="0" width="24.5" height="24.2" rx="4" fill="#5f6368"/><rect x="5.2" y="5.4" width="14.4" height="1.8" fill="#fff"/><rect x="5.2" y="9" width="14.4" height="1.8" fill="#fff"/><rect x="5.2" y="12.6" width="14.4" height="1.8" fill="#fff"/><rect x="5.2" y="16.2" width="10.6" height="1.8" fill="#fff"/></svg>
<span class="t" style="left:851.93px;top:988.50px;font-size:25.40px;color:#1a67d4;transform:scaleX(0.9676);">12.why-half-is-not-equal-to-point-fi</span>
<div class="r" style="left:853.40px;top:1015.90px;width:369.80px;height:2.00px;background:#1a67d4;"></div>
<span class="t" style="left:1222.44px;top:988.50px;font-size:25.40px;color:#1a67d4;transform:scaleX(0.8468);">...</span>
<span class="t" style="left:1302.04px;top:988.50px;font-size:25.40px;color:#5f6368;transform:scaleX(0.9393);">5.9 KB</span>
<span class="t" style="left:1443.41px;top:988.50px;font-size:25.40px;color:#5f6368;transform:scaleX(1.0258);">text/plain</span>
<span class="t" style="left:1601.24px;top:988.50px;font-size:25.40px;color:#5f6368;transform:scaleX(0.9417);">Feb 26, 2026, 11:08:46 PM</span>
<span class="t" style="left:1943.08px;top:988.50px;font-size:25.40px;color:#5f6368;transform:scaleX(0.9731);">Standard</span>
<span class="t" style="left:2149.24px;top:988.50px;font-size:25.40px;color:#5f6368;transform:scaleX(0.9413);">Feb 26, 2026, 11:08:46 PM</span>
<svg class="s" style="left:2482.00px;top:987.20px" width="28.00" height="25.00" viewBox="0 0 28 25"><path d="M13.7 1.9 V16 M8.1 10.4 L13.7 16 L19.3 10.4" fill="none" stroke="#3c4043" stroke-width="2.5"/><path d="M4.45 16.6 V19.6 a1.8 1.8 0 0 0 1.8 1.8 H21 a1.8 1.8 0 0 0 1.8 -1.8 V16.6" fill="none" stroke="#3c4043" stroke-width="2.5"/></svg>
<svg class="s" style="left:2548.90px;top:989.30px" width="9.20" height="26.80" viewBox="0 0 9.2 26.8"><circle cx="4.60" cy="4.60" r="3.60" fill="#3c4043"/><circle cx="4.60" cy="13.30" r="3.60" fill="#3c4043"/><circle cx="4.60" cy="22.20" r="3.60" fill="#3c4043"/></svg>
<div class="r" style="left:701.00px;top:1076.00px;width:1874.00px;height:1.00px;background:#dadce0;"></div>
<div class="r" style="left:736.00px;top:1038.00px;width:28.00px;height:28.00px;background:transparent;border:3px solid #202124;border-radius:4px;box-sizing:border-box;"></div>
<svg class="s" style="left:816.30px;top:1039.50px" width="24.60" height="24.30" viewBox="0 0 24.6 24.3"><rect x="0" y="0" width="24.5" height="24.2" rx="4" fill="#5f6368"/><rect x="5.2" y="5.4" width="14.4" height="1.8" fill="#fff"/><rect x="5.2" y="9" width="14.4" height="1.8" fill="#fff"/><rect x="5.2" y="12.6" width="14.4" height="1.8" fill="#fff"/><rect x="5.2" y="16.2" width="10.6" height="1.8" fill="#fff"/></svg>
<span class="t" style="left:851.94px;top:1038.50px;font-size:25.40px;color:#1a67d4;transform:scaleX(0.9636);">13.zero-tech-debt-will-kill-your-star</span>
<div class="r" style="left:853.40px;top:1065.90px;width:373.50px;height:2.00px;background:#1a67d4;"></div>
<span class="t" style="left:1226.19px;top:1038.50px;font-size:25.40px;color:#1a67d4;transform:scaleX(0.8226);">...</span>
<span class="t" style="left:1301.18px;top:1038.50px;font-size:25.40px;color:#5f6368;transform:scaleX(0.9393);">10.5 KB</span>
<span class="t" style="left:1443.41px;top:1038.50px;font-size:25.40px;color:#5f6368;transform:scaleX(1.0258);">text/plain</span>
<span class="t" style="left:1601.24px;top:1038.50px;font-size:25.40px;color:#5f6368;transform:scaleX(0.9417);">Feb 26, 2026, 11:08:47 PM</span>
<span class="t" style="left:1943.08px;top:1038.50px;font-size:25.40px;color:#5f6368;transform:scaleX(0.9731);">Standard</span>
<span class="t" style="left:2149.24px;top:1038.50px;font-size:25.40px;color:#5f6368;transform:scaleX(0.9413);">Feb 26, 2026, 11:08:47 PM</span>
<svg class="s" style="left:2482.00px;top:1037.20px" width="28.00" height="25.00" viewBox="0 0 28 25"><path d="M13.7 1.9 V16 M8.1 10.4 L13.7 16 L19.3 10.4" fill="none" stroke="#3c4043" stroke-width="2.5"/><path d="M4.45 16.6 V19.6 a1.8 1.8 0 0 0 1.8 1.8 H21 a1.8 1.8 0 0 0 1.8 -1.8 V16.6" fill="none" stroke="#3c4043" stroke-width="2.5"/></svg>
<svg class="s" style="left:2548.90px;top:1039.30px" width="9.20" height="26.80" viewBox="0 0 9.2 26.8"><circle cx="4.60" cy="4.60" r="3.60" fill="#3c4043"/><circle cx="4.60" cy="13.30" r="3.60" fill="#3c4043"/><circle cx="4.60" cy="22.20" r="3.60" fill="#3c4043"/></svg>
<div class="r" style="left:701.00px;top:1126.00px;width:1874.00px;height:1.00px;background:#dadce0;"></div>
<div class="r" style="left:736.00px;top:1088.00px;width:28.00px;height:28.00px;background:transparent;border:3px solid #202124;border-radius:4px;box-sizing:border-box;"></div>
<svg class="s" style="left:816.30px;top:1089.50px" width="24.60" height="24.30" viewBox="0 0 24.6 24.3"><rect x="0" y="0" width="24.5" height="24.2" rx="4" fill="#5f6368"/><rect x="5.2" y="5.4" width="14.4" height="1.8" fill="#fff"/><rect x="5.2" y="9" width="14.4" height="1.8" fill="#fff"/><rect x="5.2" y="12.6" width="14.4" height="1.8" fill="#fff"/><rect x="5.2" y="16.2" width="10.6" height="1.8" fill="#fff"/></svg>
<span class="t" style="left:851.94px;top:1088.50px;font-size:25.40px;color:#1a67d4;transform:scaleX(0.9602);">14.itunes-in-the-browser-building-a</span>
<div class="r" style="left:853.40px;top:1115.90px;width:375.40px;height:2.00px;background:#1a67d4;"></div>
<span class="t" style="left:1228.04px;top:1088.50px;font-size:25.40px;color:#1a67d4;transform:scaleX(0.8468);">...</span>
<span class="t" style="left:1301.18px;top:1088.50px;font-size:25.40px;color:#5f6368;transform:scaleX(0.9393);">12.4 KB</span>
<span class="t" style="left:1443.41px;top:1088.50px;font-size:25.40px;color:#5f6368;transform:scaleX(1.0258);">text/plain</span>
<span class="t" style="left:1601.24px;top:1088.50px;font-size:25.40px;color:#5f6368;transform:scaleX(0.9417);">Feb 26, 2026, 11:08:47 PM</span>
<span class="t" style="left:1943.08px;top:1088.50px;font-size:25.40px;color:#5f6368;transform:scaleX(0.9731);">Standard</span>
<span class="t" style="left:2149.24px;top:1088.50px;font-size:25.40px;color:#5f6368;transform:scaleX(0.9413);">Feb 26, 2026, 11:08:47 PM</span>
<svg class="s" style="left:2482.00px;top:1087.20px" width="28.00" height="25.00" viewBox="0 0 28 25"><path d="M13.7 1.9 V16 M8.1 10.4 L13.7 16 L19.3 10.4" fill="none" stroke="#3c4043" stroke-width="2.5"/><path d="M4.45 16.6 V19.6 a1.8 1.8 0 0 0 1.8 1.8 H21 a1.8 1.8 0 0 0 1.8 -1.8 V16.6" fill="none" stroke="#3c4043" stroke-width="2.5"/></svg>
<svg class="s" style="left:2548.90px;top:1089.30px" width="9.20" height="26.80" viewBox="0 0 9.2 26.8"><circle cx="4.60" cy="4.60" r="3.60" fill="#3c4043"/><circle cx="4.60" cy="13.30" r="3.60" fill="#3c4043"/><circle cx="4.60" cy="22.20" r="3.60" fill="#3c4043"/></svg>
<div class="r" style="left:701.00px;top:1176.00px;width:1874.00px;height:1.00px;background:#dadce0;"></div>
<div class="r" style="left:736.00px;top:1138.00px;width:28.00px;height:28.00px;background:transparent;border:3px solid #202124;border-radius:4px;box-sizing:border-box;"></div>
<svg class="s" style="left:816.30px;top:1139.50px" width="24.60" height="24.30" viewBox="0 0 24.6 24.3"><rect x="0" y="0" width="24.5" height="24.2" rx="4" fill="#5f6368"/><rect x="5.2" y="5.4" width="14.4" height="1.8" fill="#fff"/><rect x="5.2" y="9" width="14.4" height="1.8" fill="#fff"/><rect x="5.2" y="12.6" width="14.4" height="1.8" fill="#fff"/><rect x="5.2" y="16.2" width="10.6" height="1.8" fill="#fff"/></svg>
<span class="t" style="left:851.90px;top:1138.50px;font-size:25.40px;color:#1a67d4;transform:scaleX(0.9806);">15.spotify-for-the-mall-fye-listenin</span>
<div class="r" style="left:853.40px;top:1165.90px;width:365.10px;height:2.00px;background:#1a67d4;"></div>
<span class="t" style="left:1217.72px;top:1138.50px;font-size:25.40px;color:#1a67d4;transform:scaleX(0.8529);">...</span>
<span class="t" style="left:1301.88px;top:1138.50px;font-size:25.40px;color:#5f6368;transform:scaleX(0.9393);">9.7 KB</span>
<span class="t" style="left:1443.41px;top:1138.50px;font-size:25.40px;color:#5f6368;transform:scaleX(1.0258);">text/plain</span>
<span class="t" style="left:1601.24px;top:1138.50px;font-size:25.40px;color:#5f6368;transform:scaleX(0.9417);">Feb 26, 2026, 11:08:47 PM</span>
<span class="t" style="left:1943.08px;top:1138.50px;font-size:25.40px;color:#5f6368;transform:scaleX(0.9731);">Standard</span>
<span class="t" style="left:2149.24px;top:1138.50px;font-size:25.40px;color:#5f6368;transform:scaleX(0.9413);">Feb 26, 2026, 11:08:47 PM</span>
<svg class="s" style="left:2482.00px;top:1137.20px" width="28.00" height="25.00" viewBox="0 0 28 25"><path d="M13.7 1.9 V16 M8.1 10.4 L13.7 16 L19.3 10.4" fill="none" stroke="#3c4043" stroke-width="2.5"/><path d="M4.45 16.6 V19.6 a1.8 1.8 0 0 0 1.8 1.8 H21 a1.8 1.8 0 0 0 1.8 -1.8 V16.6" fill="none" stroke="#3c4043" stroke-width="2.5"/></svg>
<svg class="s" style="left:2548.90px;top:1139.30px" width="9.20" height="26.80" viewBox="0 0 9.2 26.8"><circle cx="4.60" cy="4.60" r="3.60" fill="#3c4043"/><circle cx="4.60" cy="13.30" r="3.60" fill="#3c4043"/><circle cx="4.60" cy="22.20" r="3.60" fill="#3c4043"/></svg>
<div class="r" style="left:701.00px;top:1226.00px;width:1874.00px;height:1.00px;background:#dadce0;"></div>
<div class="r" style="left:736.00px;top:1188.00px;width:28.00px;height:28.00px;background:transparent;border:3px solid #202124;border-radius:4px;box-sizing:border-box;"></div>
<svg class="s" style="left:816.30px;top:1189.50px" width="24.60" height="24.30" viewBox="0 0 24.6 24.3"><rect x="0" y="0" width="24.5" height="24.2" rx="4" fill="#5f6368"/><rect x="5.2" y="5.4" width="14.4" height="1.8" fill="#fff"/><rect x="5.2" y="9" width="14.4" height="1.8" fill="#fff"/><rect x="5.2" y="12.6" width="14.4" height="1.8" fill="#fff"/><rect x="5.2" y="16.2" width="10.6" height="1.8" fill="#fff"/></svg>
<span class="t" style="left:851.93px;top:1188.50px;font-size:25.40px;color:#1a67d4;transform:scaleX(0.9667);">16.click-where-it-hurts-the-webmd-</span>
<div class="r" style="left:853.40px;top:1215.90px;width:375.40px;height:2.00px;background:#1a67d4;"></div>
<span class="t" style="left:1228.04px;top:1188.50px;font-size:25.40px;color:#1a67d4;transform:scaleX(0.8468);">...</span>
<span class="t" style="left:1301.18px;top:1188.50px;font-size:25.40px;color:#5f6368;transform:scaleX(0.9393);">13.3 KB</span>
<span class="t" style="left:1443.41px;top:1188.50px;font-size:25.40px;color:#5f6368;transform:scaleX(1.0258);">text/plain</span>
<span class="t" style="left:1601.24px;top:1188.50px;font-size:25.40px;color:#5f6368;transform:scaleX(0.9417);">Feb 26, 2026, 11:08:47 PM</span>
<span class="t" style="left:1943.08px;top:1188.50px;font-size:25.40px;color:#5f6368;transform:scaleX(0.9731);">Standard</span>
<span class="t" style="left:2149.24px;top:1188.50px;font-size:25.40px;color:#5f6368;transform:scaleX(0.9413);">Feb 26, 2026, 11:08:47 PM</span>
<svg class="s" style="left:2482.00px;top:1187.20px" width="28.00" height="25.00" viewBox="0 0 28 25"><path d="M13.7 1.9 V16 M8.1 10.4 L13.7 16 L19.3 10.4" fill="none" stroke="#3c4043" stroke-width="2.5"/><path d="M4.45 16.6 V19.6 a1.8 1.8 0 0 0 1.8 1.8 H21 a1.8 1.8 0 0 0 1.8 -1.8 V16.6" fill="none" stroke="#3c4043" stroke-width="2.5"/></svg>
<svg class="s" style="left:2548.90px;top:1189.30px" width="9.20" height="26.80" viewBox="0 0 9.2 26.8"><circle cx="4.60" cy="4.60" r="3.60" fill="#3c4043"/><circle cx="4.60" cy="13.30" r="3.60" fill="#3c4043"/><circle cx="4.60" cy="22.20" r="3.60" fill="#3c4043"/></svg>
<div class="r" style="left:701.00px;top:1276.00px;width:1874.00px;height:1.00px;background:#dadce0;"></div>
<div class="r" style="left:736.00px;top:1238.00px;width:28.00px;height:28.00px;background:transparent;border:3px solid #202124;border-radius:4px;box-sizing:border-box;"></div>
<svg class="s" style="left:816.30px;top:1239.50px" width="24.60" height="24.30" viewBox="0 0 24.6 24.3"><rect x="0" y="0" width="24.5" height="24.2" rx="4" fill="#5f6368"/><rect x="5.2" y="5.4" width="14.4" height="1.8" fill="#fff"/><rect x="5.2" y="9" width="14.4" height="1.8" fill="#fff"/><rect x="5.2" y="12.6" width="14.4" height="1.8" fill="#fff"/><rect x="5.2" y="16.2" width="10.6" height="1.8" fill="#fff"/></svg>
<span class="t" style="left:851.92px;top:1238.50px;font-size:25.40px;color:#1a67d4;transform:scaleX(0.9699);">17.ai-is-coming-for-your-apis.txt</span>
<div class="r" style="left:853.40px;top:1265.90px;width:344.70px;height:2.00px;background:#1a67d4;"></div>
<span class="t" style="left:1301.96px;top:1238.50px;font-size:25.40px;color:#5f6368;transform:scaleX(0.9393);">8.9 KB</span>
<span class="t" style="left:1443.41px;top:1238.50px;font-size:25.40px;color:#5f6368;transform:scaleX(1.0258);">text/plain</span>
<span class="t" style="left:1601.24px;top:1238.50px;font-size:25.40px;color:#5f6368;transform:scaleX(0.9417);">Feb 26, 2026, 11:08:48 PM</span>
<span class="t" style="left:1943.08px;top:1238.50px;font-size:25.40px;color:#5f6368;transform:scaleX(0.9731);">Standard</span>
<span class="t" style="left:2149.24px;top:1238.50px;font-size:25.40px;color:#5f6368;transform:scaleX(0.9413);">Feb 26, 2026, 11:08:48 PM</span>
<svg class="s" style="left:2482.00px;top:1237.20px" width="28.00" height="25.00" viewBox="0 0 28 25"><path d="M13.7 1.9 V16 M8.1 10.4 L13.7 16 L19.3 10.4" fill="none" stroke="#3c4043" stroke-width="2.5"/><path d="M4.45 16.6 V19.6 a1.8 1.8 0 0 0 1.8 1.8 H21 a1.8 1.8 0 0 0 1.8 -1.8 V16.6" fill="none" stroke="#3c4043" stroke-width="2.5"/></svg>
<svg class="s" style="left:2548.90px;top:1239.30px" width="9.20" height="26.80" viewBox="0 0 9.2 26.8"><circle cx="4.60" cy="4.60" r="3.60" fill="#3c4043"/><circle cx="4.60" cy="13.30" r="3.60" fill="#3c4043"/><circle cx="4.60" cy="22.20" r="3.60" fill="#3c4043"/></svg>
<div class="r" style="left:701.00px;top:1326.00px;width:1874.00px;height:1.00px;background:#dadce0;"></div>
<div class="r" style="left:736.00px;top:1288.00px;width:28.00px;height:28.00px;background:transparent;border:3px solid #202124;border-radius:4px;box-sizing:border-box;"></div>
<svg class="s" style="left:816.30px;top:1289.50px" width="24.60" height="24.30" viewBox="0 0 24.6 24.3"><rect x="0" y="0" width="24.5" height="24.2" rx="4" fill="#5f6368"/><rect x="5.2" y="5.4" width="14.4" height="1.8" fill="#fff"/><rect x="5.2" y="9" width="14.4" height="1.8" fill="#fff"/><rect x="5.2" y="12.6" width="14.4" height="1.8" fill="#fff"/><rect x="5.2" y="16.2" width="10.6" height="1.8" fill="#fff"/></svg>
<span class="t" style="left:851.93px;top:1288.50px;font-size:25.40px;color:#1a67d4;transform:scaleX(0.9647);">18.real-time-geometric-rendering-</span>
<div class="r" style="left:853.40px;top:1315.90px;width:362.40px;height:2.00px;background:#1a67d4;"></div>
<span class="t" style="left:1215.01px;top:1288.50px;font-size:25.40px;color:#1a67d4;transform:scaleX(0.8589);">...</span>
<span class="t" style="left:1301.18px;top:1288.50px;font-size:25.40px;color:#5f6368;transform:scaleX(0.9393);">10.5 KB</span>
<span class="t" style="left:1443.41px;top:1288.50px;font-size:25.40px;color:#5f6368;transform:scaleX(1.0258);">text/plain</span>
<span class="t" style="left:1601.24px;top:1288.50px;font-size:25.40px;color:#5f6368;transform:scaleX(0.9417);">Feb 26, 2026, 11:08:48 PM</span>
<span class="t" style="left:1943.08px;top:1288.50px;font-size:25.40px;color:#5f6368;transform:scaleX(0.9731);">Standard</span>
<span class="t" style="left:2149.24px;top:1288.50px;font-size:25.40px;color:#5f6368;transform:scaleX(0.9413);">Feb 26, 2026, 11:08:48 PM</span>
<svg class="s" style="left:2482.00px;top:1287.20px" width="28.00" height="25.00" viewBox="0 0 28 25"><path d="M13.7 1.9 V16 M8.1 10.4 L13.7 16 L19.3 10.4" fill="none" stroke="#3c4043" stroke-width="2.5"/><path d="M4.45 16.6 V19.6 a1.8 1.8 0 0 0 1.8 1.8 H21 a1.8 1.8 0 0 0 1.8 -1.8 V16.6" fill="none" stroke="#3c4043" stroke-width="2.5"/></svg>
<svg class="s" style="left:2548.90px;top:1289.30px" width="9.20" height="26.80" viewBox="0 0 9.2 26.8"><circle cx="4.60" cy="4.60" r="3.60" fill="#3c4043"/><circle cx="4.60" cy="13.30" r="3.60" fill="#3c4043"/><circle cx="4.60" cy="22.20" r="3.60" fill="#3c4043"/></svg>
<div class="r" style="left:701.00px;top:1376.00px;width:1874.00px;height:1.00px;background:#dadce0;"></div>
<div class="r" style="left:736.00px;top:1338.00px;width:28.00px;height:28.00px;background:transparent;border:3px solid #202124;border-radius:4px;box-sizing:border-box;"></div>
<svg class="s" style="left:816.30px;top:1339.50px" width="24.60" height="24.30" viewBox="0 0 24.6 24.3"><rect x="0" y="0" width="24.5" height="24.2" rx="4" fill="#5f6368"/><rect x="5.2" y="5.4" width="14.4" height="1.8" fill="#fff"/><rect x="5.2" y="9" width="14.4" height="1.8" fill="#fff"/><rect x="5.2" y="12.6" width="14.4" height="1.8" fill="#fff"/><rect x="5.2" y="16.2" width="10.6" height="1.8" fill="#fff"/></svg>
<span class="t" style="left:851.95px;top:1338.50px;font-size:25.40px;color:#1a67d4;transform:scaleX(0.9574);">19.amazons-ai-gamble-the-real-co</span>
<div class="r" style="left:853.40px;top:1365.90px;width:369.20px;height:2.00px;background:#1a67d4;"></div>
<span class="t" style="left:1221.81px;top:1338.50px;font-size:25.40px;color:#1a67d4;transform:scaleX(0.8589);">...</span>
<span class="t" style="left:1301.78px;top:1338.50px;font-size:25.40px;color:#5f6368;transform:scaleX(0.9393);">7.7 KB</span>
<span class="t" style="left:1443.41px;top:1338.50px;font-size:25.40px;color:#5f6368;transform:scaleX(1.0258);">text/plain</span>
<span class="t" style="left:1601.24px;top:1338.50px;font-size:25.40px;color:#5f6368;transform:scaleX(0.9417);">Feb 26, 2026, 11:08:48 PM</span>
<span class="t" style="left:1943.08px;top:1338.50px;font-size:25.40px;color:#5f6368;transform:scaleX(0.9731);">Standard</span>
<span class="t" style="left:2149.24px;top:1338.50px;font-size:25.40px;color:#5f6368;transform:scaleX(0.9413);">Feb 26, 2026, 11:08:48 PM</span>
<svg class="s" style="left:2482.00px;top:1337.20px" width="28.00" height="25.00" viewBox="0 0 28 25"><path d="M13.7 1.9 V16 M8.1 10.4 L13.7 16 L19.3 10.4" fill="none" stroke="#3c4043" stroke-width="2.5"/><path d="M4.45 16.6 V19.6 a1.8 1.8 0 0 0 1.8 1.8 H21 a1.8 1.8 0 0 0 1.8 -1.8 V16.6" fill="none" stroke="#3c4043" stroke-width="2.5"/></svg>
<svg class="s" style="left:2548.90px;top:1339.30px" width="9.20" height="26.80" viewBox="0 0 9.2 26.8"><circle cx="4.60" cy="4.60" r="3.60" fill="#3c4043"/><circle cx="4.60" cy="13.30" r="3.60" fill="#3c4043"/><circle cx="4.60" cy="22.20" r="3.60" fill="#3c4043"/></svg>
<div class="r" style="left:701.00px;top:1426.00px;width:1874.00px;height:1.00px;background:#dadce0;"></div>
<div class="r" style="left:736.00px;top:1388.00px;width:28.00px;height:28.00px;background:transparent;border:3px solid #202124;border-radius:4px;box-sizing:border-box;"></div>
<svg class="s" style="left:816.30px;top:1389.50px" width="24.60" height="24.30" viewBox="0 0 24.6 24.3"><rect x="0" y="0" width="24.5" height="24.2" rx="4" fill="#5f6368"/><rect x="5.2" y="5.4" width="14.4" height="1.8" fill="#fff"/><rect x="5.2" y="9" width="14.4" height="1.8" fill="#fff"/><rect x="5.2" y="12.6" width="14.4" height="1.8" fill="#fff"/><rect x="5.2" y="16.2" width="10.6" height="1.8" fill="#fff"/></svg>
<span class="t" style="left:852.58px;top:1388.50px;font-size:25.40px;color:#1a67d4;transform:scaleX(0.9584);">20.cursor-s-trust-me-bro-ux-backe</span>
<div class="r" style="left:853.40px;top:1415.90px;width:367.40px;height:2.00px;background:#1a67d4;"></div>
<span class="t" style="left:1220.01px;top:1388.50px;font-size:25.40px;color:#1a67d4;transform:scaleX(0.8589);">...</span>
<span class="t" style="left:1301.80px;top:1388.50px;font-size:25.40px;color:#5f6368;transform:scaleX(0.9393);">21.6 KB</span>
<span class="t" style="left:1443.41px;top:1388.50px;font-size:25.40px;color:#5f6368;transform:scaleX(1.0258);">text/plain</span>
<span class="t" style="left:1601.24px;top:1388.50px;font-size:25.40px;color:#5f6368;transform:scaleX(0.9417);">Feb 26, 2026, 11:08:48 PM</span>
<span class="t" style="left:1943.08px;top:1388.50px;font-size:25.40px;color:#5f6368;transform:scaleX(0.9731);">Standard</span>
<span class="t" style="left:2149.24px;top:1388.50px;font-size:25.40px;color:#5f6368;transform:scaleX(0.9413);">Feb 26, 2026, 11:08:48 PM</span>
<svg class="s" style="left:2482.00px;top:1387.20px" width="28.00" height="25.00" viewBox="0 0 28 25"><path d="M13.7 1.9 V16 M8.1 10.4 L13.7 16 L19.3 10.4" fill="none" stroke="#3c4043" stroke-width="2.5"/><path d="M4.45 16.6 V19.6 a1.8 1.8 0 0 0 1.8 1.8 H21 a1.8 1.8 0 0 0 1.8 -1.8 V16.6" fill="none" stroke="#3c4043" stroke-width="2.5"/></svg>
<svg class="s" style="left:2548.90px;top:1389.30px" width="9.20" height="26.80" viewBox="0 0 9.2 26.8"><circle cx="4.60" cy="4.60" r="3.60" fill="#3c4043"/><circle cx="4.60" cy="13.30" r="3.60" fill="#3c4043"/><circle cx="4.60" cy="22.20" r="3.60" fill="#3c4043"/></svg>
<div class="r" style="left:701.00px;top:1476.00px;width:1874.00px;height:1.00px;background:#dadce0;"></div>
<div class="r" style="left:736.00px;top:1438.00px;width:28.00px;height:28.00px;background:transparent;border:3px solid #202124;border-radius:4px;box-sizing:border-box;"></div>
<svg class="s" style="left:816.30px;top:1439.50px" width="24.60" height="24.30" viewBox="0 0 24.6 24.3"><rect x="0" y="0" width="24.5" height="24.2" rx="4" fill="#5f6368"/><rect x="5.2" y="5.4" width="14.4" height="1.8" fill="#fff"/><rect x="5.2" y="9" width="14.4" height="1.8" fill="#fff"/><rect x="5.2" y="12.6" width="14.4" height="1.8" fill="#fff"/><rect x="5.2" y="16.2" width="10.6" height="1.8" fill="#fff"/></svg>
<span class="t" style="left:852.57px;top:1438.50px;font-size:25.40px;color:#1a67d4;transform:scaleX(0.9591);">21.building-a-linkedin-ml-persona-</span>
<div class="r" style="left:853.40px;top:1465.90px;width:366.40px;height:2.00px;background:#1a67d4;"></div>
<span class="t" style="left:1218.99px;top:1438.50px;font-size:25.40px;color:#1a67d4;transform:scaleX(0.8650);">...</span>
<span class="t" style="left:1301.18px;top:1438.50px;font-size:25.40px;color:#5f6368;transform:scaleX(0.9393);">17.7 KB</span>
<span class="t" style="left:1443.41px;top:1438.50px;font-size:25.40px;color:#5f6368;transform:scaleX(1.0258);">text/plain</span>
<span class="t" style="left:1601.24px;top:1438.50px;font-size:25.40px;color:#5f6368;transform:scaleX(0.9417);">Feb 26, 2026, 11:08:49 PM</span>
<span class="t" style="left:1943.08px;top:1438.50px;font-size:25.40px;color:#5f6368;transform:scaleX(0.9731);">Standard</span>
<span class="t" style="left:2149.24px;top:1438.50px;font-size:25.40px;color:#5f6368;transform:scaleX(0.9413);">Feb 26, 2026, 11:08:49 PM</span>
<svg class="s" style="left:2482.00px;top:1437.20px" width="28.00" height="25.00" viewBox="0 0 28 25"><path d="M13.7 1.9 V16 M8.1 10.4 L13.7 16 L19.3 10.4" fill="none" stroke="#3c4043" stroke-width="2.5"/><path d="M4.45 16.6 V19.6 a1.8 1.8 0 0 0 1.8 1.8 H21 a1.8 1.8 0 0 0 1.8 -1.8 V16.6" fill="none" stroke="#3c4043" stroke-width="2.5"/></svg>
<svg class="s" style="left:2548.90px;top:1439.30px" width="9.20" height="26.80" viewBox="0 0 9.2 26.8"><circle cx="4.60" cy="4.60" r="3.60" fill="#3c4043"/><circle cx="4.60" cy="13.30" r="3.60" fill="#3c4043"/><circle cx="4.60" cy="22.20" r="3.60" fill="#3c4043"/></svg>
<div class="r" style="left:701.00px;top:1526.00px;width:1874.00px;height:1.00px;background:#dadce0;"></div>
<div class="r" style="left:736.00px;top:1488.00px;width:28.00px;height:28.00px;background:transparent;border:3px solid #202124;border-radius:4px;box-sizing:border-box;"></div>
<svg class="s" style="left:816.30px;top:1489.50px" width="24.60" height="24.30" viewBox="0 0 24.6 24.3"><rect x="0" y="0" width="24.5" height="24.2" rx="4" fill="#5f6368"/><rect x="5.2" y="5.4" width="14.4" height="1.8" fill="#fff"/><rect x="5.2" y="9" width="14.4" height="1.8" fill="#fff"/><rect x="5.2" y="12.6" width="14.4" height="1.8" fill="#fff"/><rect x="5.2" y="16.2" width="10.6" height="1.8" fill="#fff"/></svg>
<span class="t" style="left:852.57px;top:1488.50px;font-size:25.40px;color:#1a67d4;transform:scaleX(0.9665);">22.why-llms-cant-play-chess.txt</span>
<div class="r" style="left:853.40px;top:1515.90px;width:341.40px;height:2.00px;background:#1a67d4;"></div>
<span class="t" style="left:1301.80px;top:1488.50px;font-size:25.40px;color:#5f6368;transform:scaleX(0.9393);">25.7 KB</span>
<span class="t" style="left:1443.41px;top:1488.50px;font-size:25.40px;color:#5f6368;transform:scaleX(1.0258);">text/plain</span>
<span class="t" style="left:1601.24px;top:1488.50px;font-size:25.40px;color:#5f6368;transform:scaleX(0.9417);">Feb 26, 2026, 11:08:49 PM</span>
<span class="t" style="left:1943.08px;top:1488.50px;font-size:25.40px;color:#5f6368;transform:scaleX(0.9731);">Standard</span>
<span class="t" style="left:2149.24px;top:1488.50px;font-size:25.40px;color:#5f6368;transform:scaleX(0.9413);">Feb 26, 2026, 11:08:49 PM</span>
<svg class="s" style="left:2482.00px;top:1487.20px" width="28.00" height="25.00" viewBox="0 0 28 25"><path d="M13.7 1.9 V16 M8.1 10.4 L13.7 16 L19.3 10.4" fill="none" stroke="#3c4043" stroke-width="2.5"/><path d="M4.45 16.6 V19.6 a1.8 1.8 0 0 0 1.8 1.8 H21 a1.8 1.8 0 0 0 1.8 -1.8 V16.6" fill="none" stroke="#3c4043" stroke-width="2.5"/></svg>
<svg class="s" style="left:2548.90px;top:1489.30px" width="9.20" height="26.80" viewBox="0 0 9.2 26.8"><circle cx="4.60" cy="4.60" r="3.60" fill="#3c4043"/><circle cx="4.60" cy="13.30" r="3.60" fill="#3c4043"/><circle cx="4.60" cy="22.20" r="3.60" fill="#3c4043"/></svg>
<div class="r" style="left:702.00px;top:1537.00px;width:951.00px;height:17.00px;background:#cbcbcb;border-left:2px solid #b3b3b3;border-top:2px solid #b3b3b3;box-sizing:border-box;"></div>
<span class="t" style="left:1932.21px;top:1571.01px;font-size:24.80px;color:#5f6368;transform:scaleX(0.9758);">Rows per page:</span>
<span class="t" style="left:2137.30px;top:1571.01px;font-size:24.80px;color:#202124;transform:scaleX(1.0073);">100</span>
<svg class="s" style="left:2186.40px;top:1577.50px" width="19.40" height="11.50" viewBox="0 0 19.4 11.5"><path d="M1 1 H18.40 L9.70 10.50 Z" fill="#202124"/></svg>
<span class="t" style="left:2260.68px;top:1571.01px;font-size:24.80px;color:#5f6368;transform:scaleX(1.0166);">1 – 15 of 15</span>
<svg class="s" style="left:2444.00px;top:1568.00px" width="22.00" height="30.00" viewBox="0 0 22 30"><path d="M17.2 3.6 L6 15.2 L17.2 26.8" fill="none" stroke="#bdc1c6" stroke-width="3"/></svg>
<svg class="s" style="left:2515.00px;top:1568.00px" width="22.00" height="30.00" viewBox="0 0 22 30"><path d="M4.8 3.6 L16 15.2 L4.8 26.8" fill="none" stroke="#bdc1c6" stroke-width="3"/></svg>
</body></html>
